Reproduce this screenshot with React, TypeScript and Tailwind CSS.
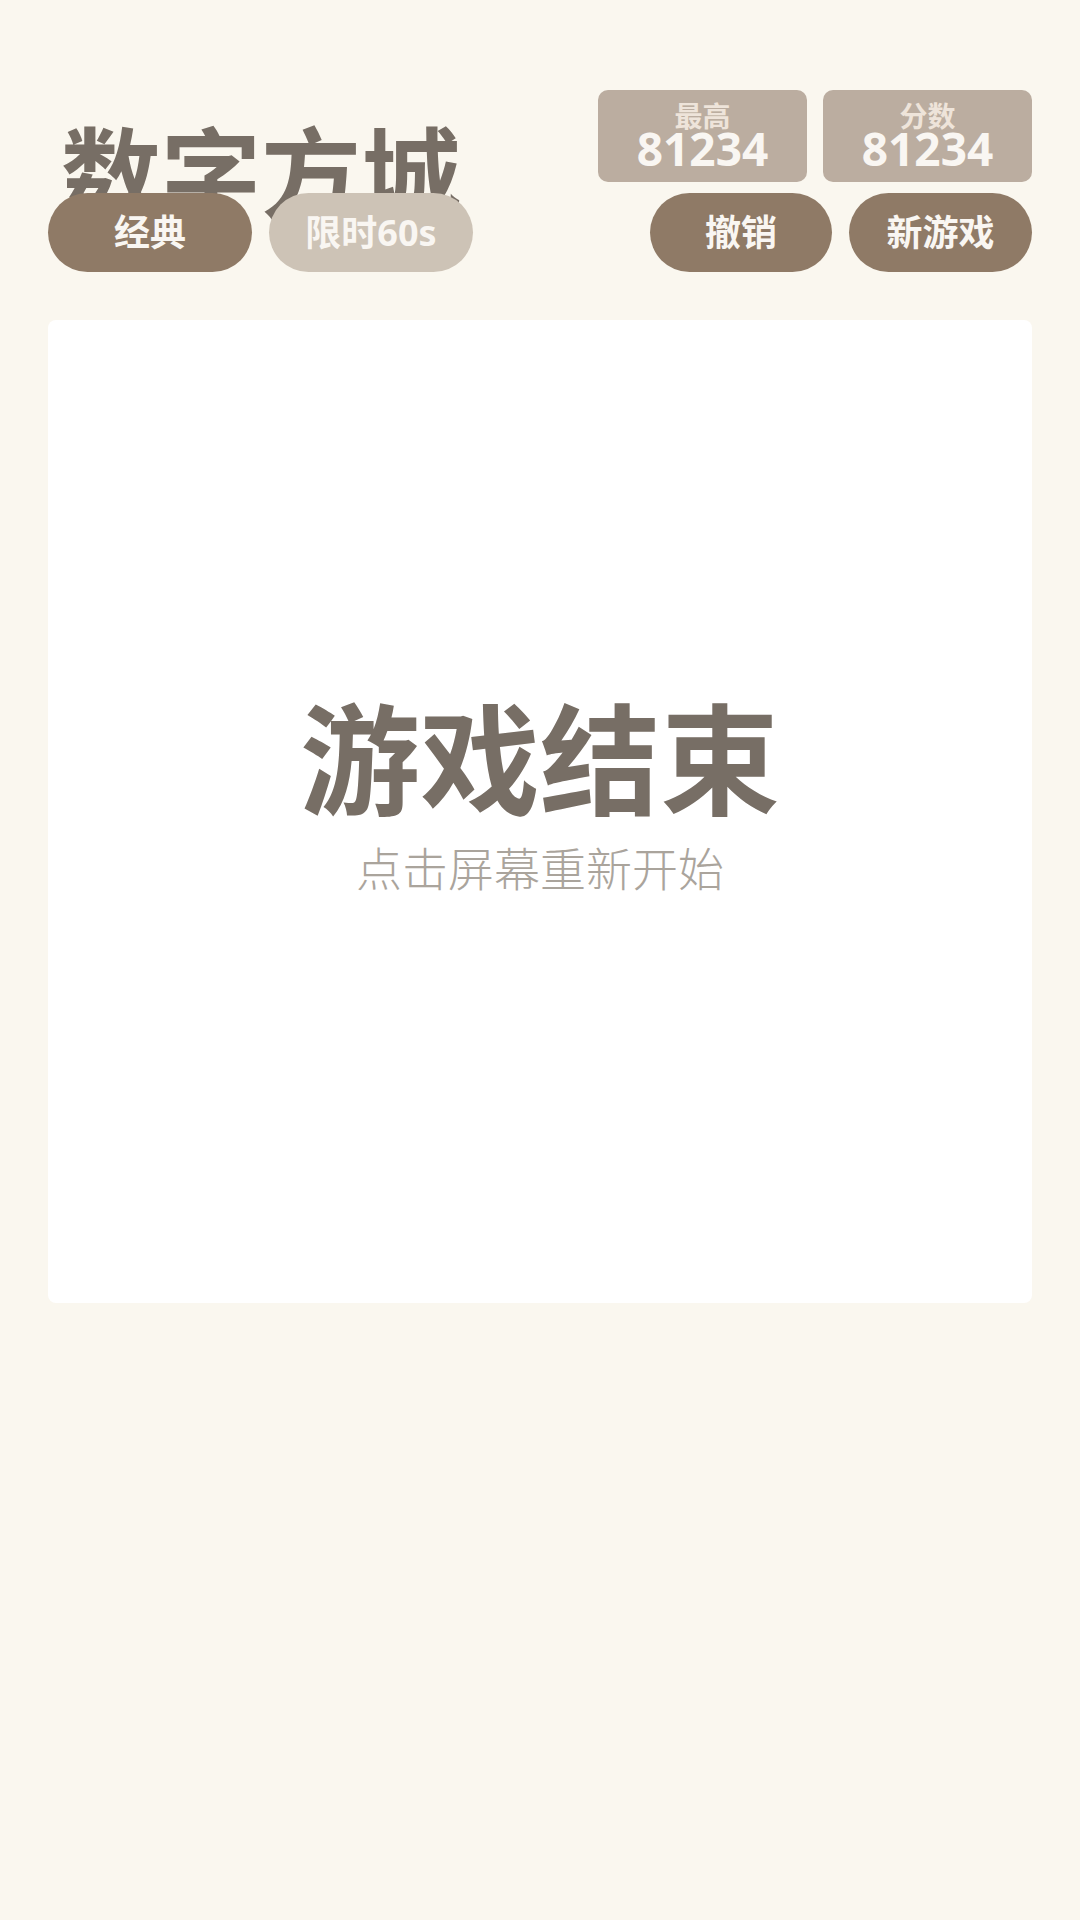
import * as React from "react"

const FONT = "font-['Noto_Sans','Noto_Sans_CJK_SC',sans-serif]"

function ScoreBox({ label, value }: { label: string; value: string }) {
  return (
    <div className="flex h-[92px] w-[209px] flex-col items-center rounded-[10px] bg-[#bbada0] pt-[12px]">
      <span className="text-[28px] font-bold leading-none text-[#eee4da]">{label}</span>
      <span className="-mt-[5px] text-[46px] font-bold leading-none text-[#f9f6f2]">{value}</span>
    </div>
  )
}

function PillButton({
  children,
  active = true,
  width,
}: {
  children: React.ReactNode
  active?: boolean
  width: string
}) {
  return (
    <button
      type="button"
      className={
        "relative flex h-[79px] items-center justify-center rounded-full text-[36px] font-bold leading-none text-[#f9f6f2] " +
        width +
        (active ? " bg-[#8f7a66]" : " bg-[#cdc3b6]")
      }
    >
      {children}
    </button>
  )
}

export default function App() {
  return (
    <div className={"min-h-[1920px] bg-[#faf7ef] px-12 pt-[90px] " + FONT}>
      {/* Header */}
      <header className="flex justify-between">
        <div className="flex flex-col gap-[11px]">
          <h1 className="h-[92px] whitespace-nowrap pl-[13px] pt-[33px] text-[100px] font-bold leading-none text-[#776e65]">
            数字方城
          </h1>
          <div className="flex gap-[17px]">
            <PillButton width="w-[204px]">经典</PillButton>
            <PillButton width="w-[204px]" active={false}>
              限时60s
            </PillButton>
          </div>
        </div>
        <div className="flex flex-col items-end gap-[11px]">
          <div className="flex gap-[16px]">
            <ScoreBox label="最高" value="81234" />
            <ScoreBox label="分数" value="81234" />
          </div>
          <div className="flex gap-[17px]">
            <PillButton width="w-[182px]">撤销</PillButton>
            <PillButton width="w-[183px]">新游戏</PillButton>
          </div>
        </div>
      </header>

      {/* Board */}
      <main className="mt-12 flex h-[983px] flex-col items-center rounded-[8px] bg-white pt-[380px]">
        <h2 className="text-[120px] font-bold leading-none text-[#776e65]">游戏结束</h2>
        <p className="mt-[25px] text-[46px] font-light leading-none text-[#aaa49c]">
          点击屏幕重新开始
        </p>
      </main>
    </div>
  )
}
